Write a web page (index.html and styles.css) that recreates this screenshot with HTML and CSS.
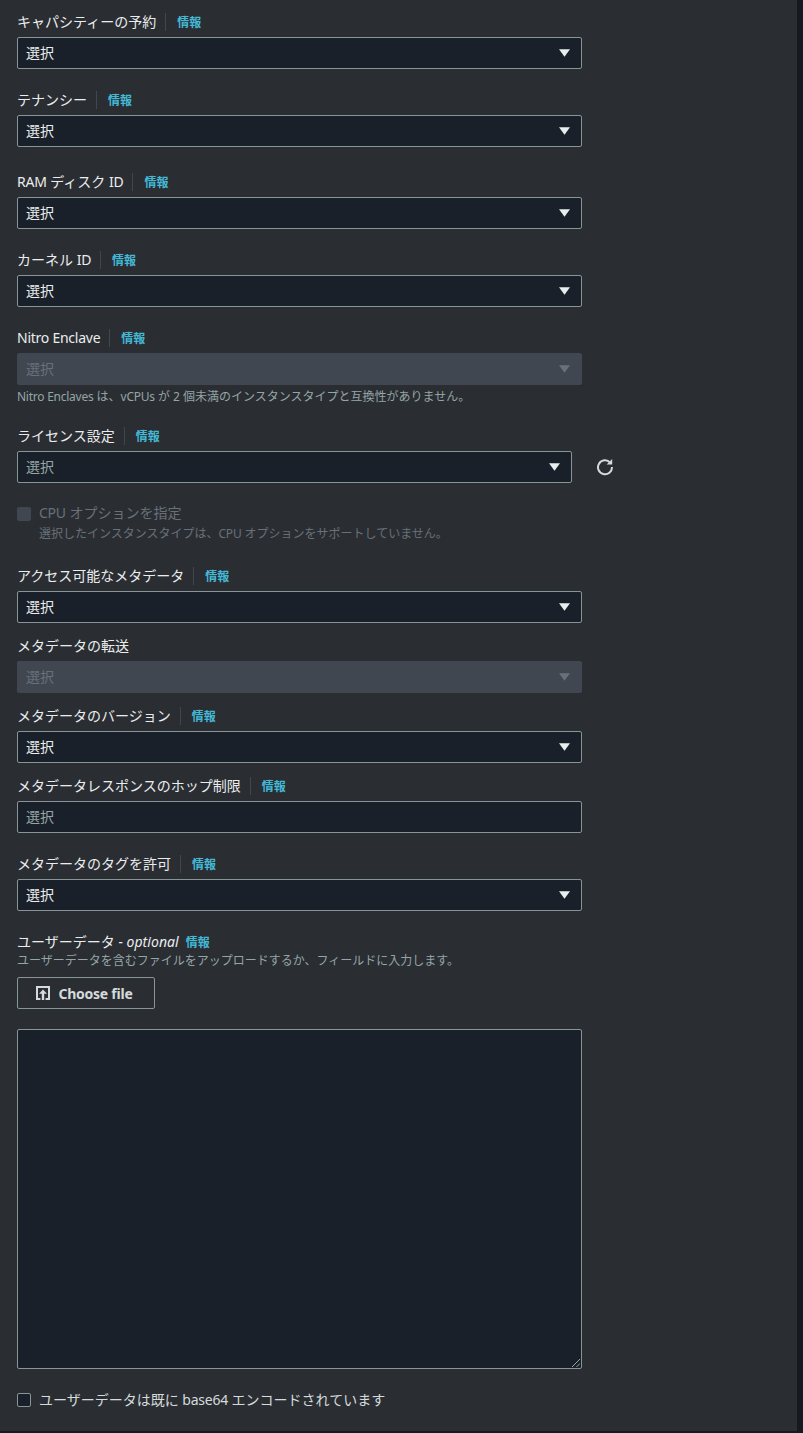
FILE: index.html
```html
<!DOCTYPE html>
<html lang="ja">
<head>
  <meta charset="UTF-8" />
  <title>インスタンスの詳細設定</title>
  <link rel="stylesheet" href="styles.css">
</head>
<body>

<div class="page">
  <div class="form">

    <div class="field">
      <div class="label-row"><label>キャパシティーの予約</label><a class="info">情報</a></div>
      <div class="select"><span>選択</span><svg class="caret" viewBox="0 0 12 8"><path d="M0 0h12L6 8z"/></svg></div>
    </div>

    <div class="field wide">
      <div class="label-row"><label>テナンシー</label><a class="info">情報</a></div>
      <div class="select"><span>選択</span><svg class="caret" viewBox="0 0 12 8"><path d="M0 0h12L6 8z"/></svg></div>
    </div>

    <div class="field">
      <div class="label-row"><label><span class="lat">RAM</span> ディスク <span class="lat">ID</span></label><a class="info">情報</a></div>
      <div class="select"><span>選択</span><svg class="caret" viewBox="0 0 12 8"><path d="M0 0h12L6 8z"/></svg></div>
    </div>

    <div class="field">
      <div class="label-row"><label>カーネル <span class="lat">ID</span></label><a class="info">情報</a></div>
      <div class="select"><span>選択</span><svg class="caret" viewBox="0 0 12 8"><path d="M0 0h12L6 8z"/></svg></div>
    </div>

    <div class="field">
      <div class="label-row"><label><span class="lat">Nitro Enclave</span></label><a class="info">情報</a></div>
      <div class="select disabled"><span>選択</span><svg class="caret" viewBox="0 0 12 8"><path d="M0 0h12L6 8z"/></svg></div>
      <p class="hint"><span class="lat">Nitro Enclaves</span> は、<span class="lat">vCPUs</span> が 2 個未満のインスタンスタイプと互換性がありません。</p>
    </div>

    <div class="field">
      <div class="label-row"><label>ライセンス設定</label><a class="info">情報</a></div>
      <div class="with-refresh">
        <div class="select short placeholder"><span>選択</span><svg class="caret" viewBox="0 0 12 8"><path d="M0 0h12L6 8z"/></svg></div>
        <svg class="refresh" viewBox="0 0 18 18">
          <path d="M14.2 4.6A7 7 0 1 0 16 9" fill="none" stroke="currentColor" stroke-width="2"/>
          <path d="M10.6 6.6h5.6V1z"/>
        </svg>
      </div>
    </div>

    <div class="check-row cpu">
      <span class="checkbox off"></span>
      <div class="check-text">
        <div class="check-title"><span class="lat">CPU</span> オプションを指定</div>
        <div class="check-sub">選択したインスタンスタイプは、<span class="lat">CPU</span> オプションをサポートしていません。</div>
      </div>
    </div>

    <div class="field after-cpu">
      <div class="label-row"><label>アクセス可能なメタデータ</label><a class="info">情報</a></div>
      <div class="select"><span>選択</span><svg class="caret" viewBox="0 0 12 8"><path d="M0 0h12L6 8z"/></svg></div>
    </div>

    <div class="field tight">
      <div class="label-row"><label class="solo">メタデータの転送</label></div>
      <div class="select disabled"><span>選択</span><svg class="caret" viewBox="0 0 12 8"><path d="M0 0h12L6 8z"/></svg></div>
    </div>

    <div class="field tight">
      <div class="label-row"><label>メタデータのバージョン</label><a class="info">情報</a></div>
      <div class="select"><span>選択</span><svg class="caret" viewBox="0 0 12 8"><path d="M0 0h12L6 8z"/></svg></div>
    </div>

    <div class="field tight">
      <div class="label-row"><label>メタデータレスポンスのホップ制限</label><a class="info">情報</a></div>
      <div class="select placeholder"><span>選択</span></div>
    </div>

    <div class="field">
      <div class="label-row"><label>メタデータのタグを許可</label><a class="info">情報</a></div>
      <div class="select"><span>選択</span><svg class="caret" viewBox="0 0 12 8"><path d="M0 0h12L6 8z"/></svg></div>
    </div>

    <div class="field">
      <div class="label-row plain"><label>ユーザーデータ <i>- optional</i></label><a class="info">情報</a></div>
      <p class="desc">ユーザーデータを含むファイルをアップロードするか、フィールドに入力します。</p>
      <button class="file-btn">
        <svg viewBox="0 0 14 14"><path d="M0 0h14v14H9.6v-2h2.4V2H2v10h2.4v2H0z"/><path d="M7 3.6l4 4.2H8.2V14H5.8V7.8H3z"/></svg>
        <span class="lat">Choose file</span>
      </button>
      <div class="userdata"><svg class="grip" viewBox="0 0 9 9"><path d="M0 9L9 0M5 9L9 5" fill="none" stroke="#aab7b8"/></svg></div>
    </div>

    <div class="check-row base64">
      <span class="checkbox"></span>
      <div class="check-title on">ユーザーデータは既に <span class="lat">base64</span> エンコードされています</div>
    </div>

  </div>
</div>

</body>
</html>
```

FILE: styles.css
```css
* { margin: 0; padding: 0; box-sizing: border-box; }

html, body { height: 100%; }

body {
  font-family: "Noto Sans", "Noto Sans CJK JP", sans-serif;
  font-size: 14px;
  line-height: 22px;
  color: #eaeded;
  background: #16191f;
  overflow: hidden;
}

.page {
  width: 797px;
  height: 1431px;
  background: #2a2e33;
  padding: 11px 0 0 17px;
}

.form {
  width: 565px;
}

/* latin runs come out a touch wide in this font */
.lat { letter-spacing: -0.25px; }

.field {
  margin-bottom: 20px;
}

.field.wide { margin-bottom: 24px; }
.field.after-cpu { margin-top: 23px; }

/* these rows sit closer together */
.field:has(+ .tight) { margin-bottom: 12px; }
.field.tight { margin-bottom: 12px; }
.field.tight:has(+ .field:not(.tight)) { margin-bottom: 20px; }

.label-row {
  display: flex;
  align-items: center;
  height: 22px;
  margin-bottom: 4px;
}

.label-row label {
  padding-right: 9px;
  margin-right: 11px;
  border-right: 1px solid #414750;
  height: 18px;
  line-height: 18px;
  white-space: nowrap;
}

.label-row label.solo { border-right: none; }

.label-row.plain { height: 22px; margin-bottom: 0; }

.label-row.plain label {
  border-right: none;
  margin-right: 7px;
  padding-right: 0;
}

.label-row.plain i { letter-spacing: 0.05px; }

.info {
  font-size: 12px;
  font-weight: 700;
  color: #44b9d6;
  padding-top: 2px;
}

.select {
  display: flex;
  align-items: center;
  justify-content: space-between;
  height: 32px;
  padding: 0 11px 1px 8px;
  background: #1a2029;
  border: 1px solid #879596;
  border-radius: 2px;
  color: #eaeded;
}

.select.placeholder { color: #95a5a6; }

.select.short { width: 555px; }

.select.disabled {
  background: #414750;
  border-color: #414750;
  color: #687078;
}

.caret {
  width: 11px;
  height: 8px;
  margin-top: 1px;
  fill: #eaeded;
}

.disabled .caret { fill: #687078; }

.with-refresh {
  display: flex;
  align-items: center;
  width: 600px;
}

.refresh {
  width: 18px;
  height: 18px;
  margin-left: 24px;
  fill: #d5dbdb;
  color: #d5dbdb;
}

.hint {
  font-size: 12px;
  line-height: 18px;
  margin: 3px 0 -1px;
  color: #95a5a6;
}

.desc {
  font-size: 12px;
  line-height: 14px;
  margin-top: 1px;
  color: #95a5a6;
}

.check-row {
  display: flex;
  gap: 8px;
}

.cpu { margin-top: -1px; }

.checkbox {
  flex: none;
  width: 14px;
  height: 14px;
  margin-top: 4px;
  background: #1a2029;
  border: 1px solid #879596;
  border-radius: 2px;
}

.checkbox.off {
  background: #414750;
  border-color: #414750;
  margin-top: 5px;
}

.check-title { color: #687078; line-height: 22px; }
.check-title.on { color: #d5dbdb; }

.check-sub {
  font-size: 12px;
  line-height: 16px;
  margin-top: 2px;
  color: #687078;
}

.file-btn {
  display: flex;
  align-items: center;
  justify-content: center;
  gap: 9px;
  width: 138px;
  height: 32px;
  margin-top: 9px;
  padding-right: 4px;
  background: transparent;
  border: 1px solid #879596;
  border-radius: 2px;
  color: #d5dbdb;
  font: 700 14px "Noto Sans", sans-serif;
}

.file-btn svg {
  width: 14px;
  height: 14px;
  fill: #d5dbdb;
}

.userdata {
  position: relative;
  height: 340px;
  margin-top: 20px;
  background: #1a2029;
  border: 1px solid #879596;
  border-radius: 2px;
}

.grip {
  position: absolute;
  right: 1px;
  bottom: 1px;
  width: 8px;
  height: 8px;
}
```
